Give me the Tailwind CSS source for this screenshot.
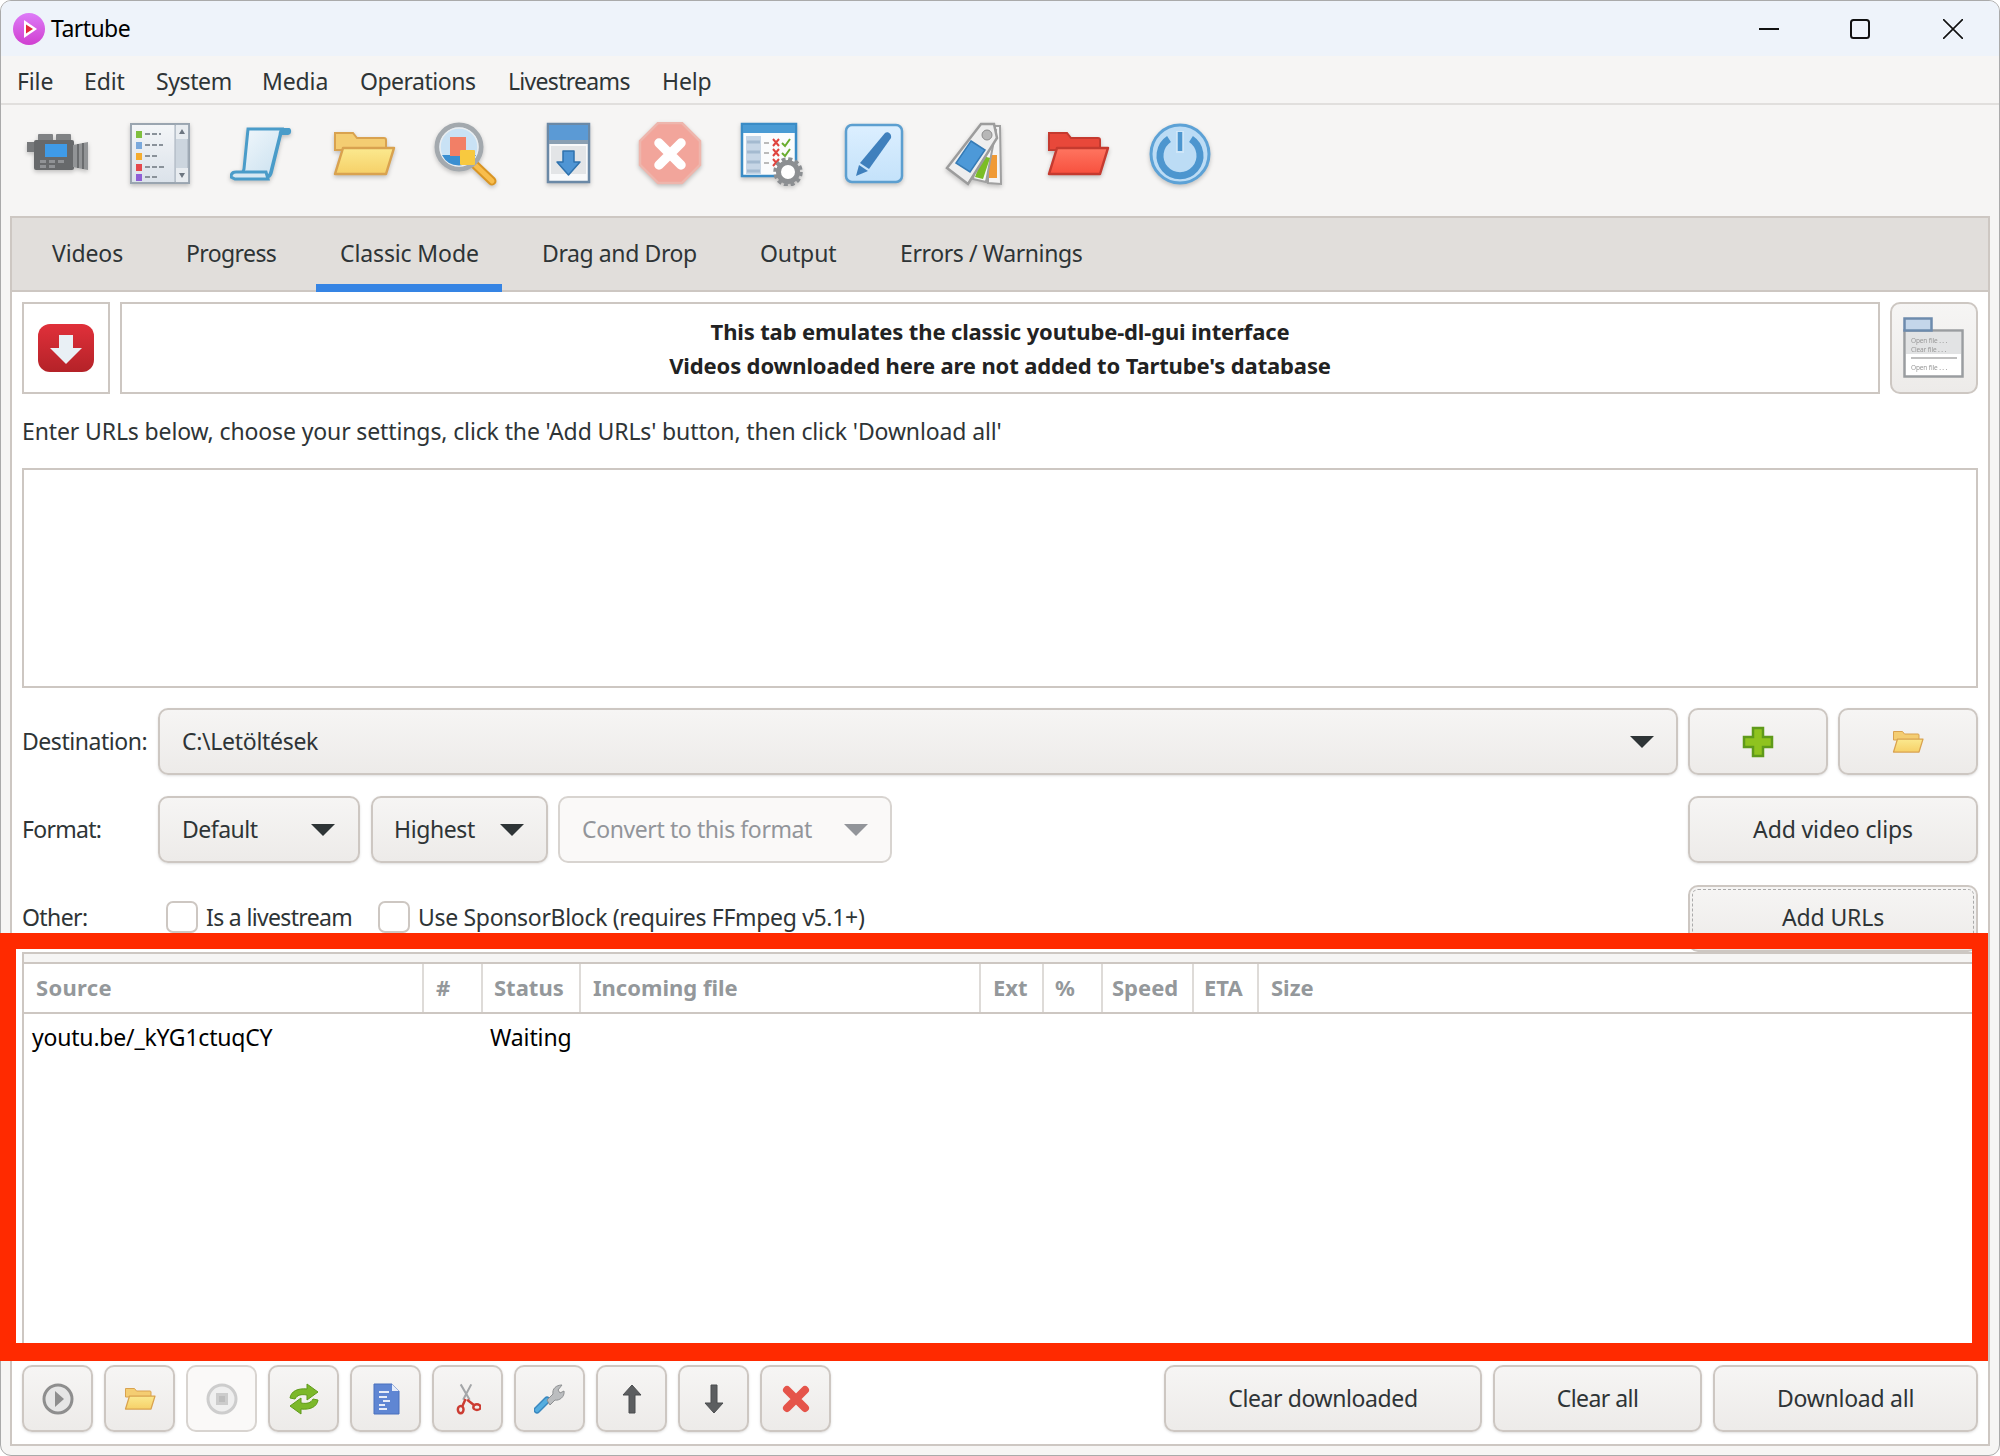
<!DOCTYPE html>
<html lang="en">
<head>
  <meta charset="UTF-8">
  <title>Tartube</title>
  <script src="https://cdn.jsdelivr.net/npm/@tailwindcss/browser@4"></script>
</head>
<body class="bg-white">
<!-- shared icons -->
<svg class="absolute w-0 h-0" aria-hidden="true">
  <defs>
    <linearGradient id="gBtn" x1="0" y1="0" x2="0" y2="1"><stop offset="0" stop-color="#fbe98f"/><stop offset="1" stop-color="#f6d068"/></linearGradient>
    <linearGradient id="gRed" x1="0" y1="0" x2="0" y2="1"><stop offset="0" stop-color="#ff7560"/><stop offset="1" stop-color="#f7503e"/></linearGradient>
    <linearGradient id="gPanel" x1="0" y1="0" x2="0" y2="1"><stop offset="0" stop-color="#f4f6f8"/><stop offset="1" stop-color="#dbe2ea"/></linearGradient>
    <linearGradient id="gScroll" x1="0" y1="0" x2="1" y2="1"><stop offset="0" stop-color="#f2f8fc"/><stop offset="1" stop-color="#c9e0ef"/></linearGradient>
    <linearGradient id="gYt" x1="0" y1="0" x2="0" y2="1"><stop offset="0" stop-color="#e0303a"/><stop offset="1" stop-color="#b42228"/></linearGradient>
    <linearGradient id="gPen" x1="0" y1="0" x2="0" y2="1"><stop offset="0" stop-color="#dcefff"/><stop offset="1" stop-color="#c4e2fa"/></linearGradient>
    <linearGradient id="gLogo" x1="0" y1="0" x2="0" y2="1"><stop offset="0" stop-color="#dd7cf8"/><stop offset="1" stop-color="#d03fd0"/></linearGradient>
    <symbol id="folder" viewBox="0 0 64 64">
      <path d="M3 11h18l4 5h27a2 2 0 0 1 2 2v10H3z" fill="#f4cd72" stroke="#d9a24f" stroke-width="2"/>
      <path d="M11 26h51l-8 26H3z" fill="url(#gBtn)" stroke="#d9a24f" stroke-width="2.5" stroke-linejoin="round"/>
    </symbol>
  </defs>
</svg>

<div class="relative w-[2000px] h-[1456px] overflow-hidden font-['Noto_Sans'] text-[23px] tracking-[-0.125px] text-[#2e3436]">
  <div class="flex flex-col h-full bg-[#f6f5f4] border border-[#aaaaaa] rounded-[11px] overflow-hidden">

    <!-- title bar -->
    <div class="flex items-center h-[55px] bg-[#eef3fa] text-black">
      <svg class="ml-[12px] w-[32px] h-[32px]" viewBox="0 0 32 32">
        <circle cx="16" cy="16" r="16" fill="url(#gLogo)"/>
        <path d="M11 7l13 9-13 9z" fill="#fff"/>
        <path d="M13 11.500l7 4.500-7 4.500z" fill="#e5283a"/>
      </svg>
      <span class="ml-[6px] tracking-[-0.55px]">Tartube</span>
      <div class="ml-auto flex items-center">
        <svg class="w-[20px] h-[20px] mr-[71px]" viewBox="0 0 20 20"><path d="M0 10h20" stroke="#111" stroke-width="2"/></svg>
        <svg class="w-[20px] h-[20px] mr-[73px]" viewBox="0 0 20 20"><rect x="1" y="1" width="18" height="18" rx="2.500" fill="none" stroke="#111" stroke-width="2"/></svg>
        <svg class="w-[20px] h-[20px] mr-[36px]" viewBox="0 0 20 20"><path d="M0 0l20 20M20 0L0 20" stroke="#111" stroke-width="1.600"/></svg>
      </div>
    </div>

    <!-- menu -->
    <div class="flex items-center h-[49px] pl-[16px] pt-[3px] border-b-2 border-[#e1dfdd]">
      <span class="w-[67px]">File</span>
      <span class="w-[72px]">Edit</span>
      <span class="w-[106px] tracking-[-0.4px]">System</span>
      <span class="w-[98px]">Media</span>
      <span class="w-[148px] tracking-[-0.5px]">Operations</span>
      <span class="w-[154px] tracking-[-0.7px]">Livestreams</span>
      <span>Help</span>
    </div>

    <!-- toolbar -->
    <div class="flex items-start h-[111px] pl-[6px] pt-[17px] blur-[0.5px] drop-shadow-[0_2px_2px_rgba(0,0,0,0.22)]">
      <div class="w-[102px] flex justify-center"><svg class="w-[64px] h-[64px]" viewBox="0 0 64 64">
        <path d="M1 20h9v10H1z" fill="#77797b"/>
        <rect x="12" y="12" width="15" height="7" rx="1" fill="#808284"/><rect x="30" y="12" width="15" height="7" rx="1" fill="#808284"/>
        <rect x="8" y="18" width="40" height="30" rx="2" fill="#67696b"/>
        <path d="M47 23l15-3v28l-15-3z" fill="#929496"/><path d="M52 22v24M57 21v26" stroke="#6a6c6e" stroke-width="2"/>
        <rect x="19" y="22" width="22" height="13" fill="#3f9be8"/>
        <path d="M14 38h6v3h-6zM23 38h6v3h-6zM32 38h6v3h-6zM14 43h6v3h-6zM23 43h6v3h-6z" fill="#909295"/>
      </svg></div>
      <div class="w-[102px] flex justify-center"><svg class="w-[64px] h-[64px]" viewBox="0 0 64 64">
        <rect x="3" y="2" width="58" height="59" fill="url(#gPanel)" stroke="#9aa5b0" stroke-width="2"/>
        <path d="M47 3h13v57H47z" fill="#ccd5de" stroke="#a5afba"/><path d="M48 3h12v14H48zM48 46h12v14H48z" fill="#e8ecf0"/>
        <path d="M51 12l3-5 3 5zM51 51l3 5 3-5z" fill="#6d7680"/>
        <path d="M8 9h6v7H8z" fill="#7fbf3f"/><path d="M8 20h6v7H8z" fill="#7aa9dc"/><path d="M8 31h6v7H8z" fill="#f5ac2f"/><path d="M8 42h6v7H8z" fill="#e5484d"/><path d="M8 52h6v7H8z" fill="#8f5fd6"/>
        <path d="M17 12h16M17 23h18M17 34h12M17 45h20M17 55h14" stroke="#8a929a" stroke-width="1.800" stroke-dasharray="5 2"/>
      </svg></div>
      <div class="w-[102px] flex justify-center"><svg class="w-[64px] h-[64px]" viewBox="0 0 64 64">
        <path d="M17 6h42c3 0 3 7-1 7h-6l-9 37c-1 5-4 7-8 7H5c-3 0-5-2-4-5h35c2 0 3-1 4-3l8-36c1-4 0-7-4-7z" fill="#4a9cc9"/>
        <path d="M18 7h36c-3 1-4 4-4 6l-9 36c-1 4-2 5-4 5H8c4 0 5-4 6-7z" fill="url(#gScroll)" stroke="#4a9cc9" stroke-width="3"/>
        <path d="M1 55c0-4 2-5 5-5h30l2 7H5z" fill="#d8e8f2" stroke="#4a9cc9" stroke-width="3"/>
      </svg></div>
      <div class="w-[102px] flex justify-center"><svg class="w-[64px] h-[64px]"><use href="#folder"/></svg></div>
      <div class="w-[102px] flex justify-center"><svg class="w-[64px] h-[64px]" viewBox="0 0 64 64">
        <path d="M38 40l20 19" stroke="#d99524" stroke-width="9" stroke-linecap="round"/><path d="M38 40l20 19" stroke="#f8bd4c" stroke-width="5" stroke-linecap="round"/>
        <circle cx="25" cy="25" r="22" fill="#c9e2f5" stroke="#a3a9ae" stroke-width="5"/>
        <circle cx="25" cy="25" r="19" fill="none" stroke="#e9edf0" stroke-width="1.500"/>
        <path d="M8 33h34a19 19 0 0 1-34 0z" fill="#3a8fd1"/>
        <rect x="16" y="15" width="16" height="19" fill="#f27f66"/><rect x="26" y="28" width="15" height="15" rx="1" fill="#f8c93f"/>
      </svg></div>
      <div class="w-[102px] flex justify-center"><svg class="w-[64px] h-[64px]" viewBox="0 0 64 64">
        <rect x="12" y="2" width="41" height="58" fill="#f8f9fa" stroke="#6b89a6" stroke-width="2.500"/>
        <rect x="13" y="3" width="39" height="19" fill="#5b9ad5"/><rect x="13" y="18" width="39" height="4" fill="#8a9fb2"/>
        <rect x="15" y="24" width="35" height="28" fill="#e3e5e7"/>
        <path d="M27 29h11v11h6L32.500 53 21 40h6z" fill="#4f95d4" stroke="#2f72ad" stroke-width="1.500" stroke-linejoin="round"/>
      </svg></div>
      <div class="w-[102px] flex justify-center"><svg class="w-[64px] h-[64px]" viewBox="0 0 64 64">
        <path d="M20 1h24l18 18v24L44 61H20L2 43V19z" fill="#f2a59b" stroke="#eeb6ad" stroke-width="2.500"/>
        <path d="M21 21l22 22M43 21L21 43" stroke="#fff" stroke-width="9.500" stroke-linecap="round"/>
      </svg></div>
      <div class="w-[102px] flex justify-center"><svg class="w-[64px] h-[64px]" viewBox="0 0 64 64">
        <rect x="2" y="2" width="54" height="52" fill="#fbfcfd" stroke="#3a8cc6" stroke-width="2.500"/>
        <rect x="3" y="3" width="52" height="8" fill="#4a9bd4"/><rect x="6" y="14" width="15" height="38" fill="#c7d6e6"/>
        <path d="M7 20h13M7 30h13M7 40h13M7 49h13" stroke="#a4bad0" stroke-width="3"/>
        <path d="M24 21h5M24 31h5M24 41h5" stroke="#bbb" stroke-width="2"/>
        <path d="M33 17l6 7M39 17l-6 7M33 27l6 7M39 27l-6 7M33 37l6 7M39 37l-6 7" stroke="#e0453f" stroke-width="2"/>
        <path d="M42 21l3 3 5-7M42 31l3 3 5-7M43 41l2 2 5-6" stroke="#69ad2f" stroke-width="2" fill="none"/>
        <circle cx="48" cy="50" r="9.500" fill="#fff" stroke="#8c8f92" stroke-width="5"/>
        <circle cx="48" cy="50" r="13" fill="none" stroke="#8c8f92" stroke-width="3.500" stroke-dasharray="4 2.800"/>
      </svg></div>
      <div class="w-[102px] flex justify-center"><svg class="w-[64px] h-[64px]" viewBox="0 0 64 64">
        <rect x="4" y="3" width="56" height="57" rx="6" fill="url(#gPen)" stroke="#5c9fd0" stroke-width="2.500"/>
        <path d="M43 11c3-2 7 1 6 5L27 47l-9-6z" fill="#3f80bd"/><path d="M17 43l9 6-12 5z" fill="#3f80bd"/>
      </svg></div>
      <div class="w-[102px] flex justify-center"><svg class="w-[64px] h-[64px]" viewBox="0 0 64 64">
        <path d="M44 4h12l1 58-13-1z" fill="#f4f4f4" stroke="#a0a0a0" stroke-width="2"/><rect x="45" y="33" width="8" height="23" fill="#f09a35"/>
        <path d="M40 6l12 2-10 52-13-3z" fill="#f7f7f7" stroke="#a0a0a0" stroke-width="2"/><path d="M39 34l7 2-7 21-8-2z" fill="#7bbd25"/>
        <path d="M37 2h13l3 14-29 46L3 46z" fill="#eeeeee" stroke="#9c9c9c" stroke-width="2.500"/>
        <path d="M27 19l14 9-15 22-14-9z" fill="#4d99d8" stroke="#357bb6" stroke-width="1.500"/>
        <circle cx="43" cy="13" r="5" fill="#b7b7b7" stroke="#8c8c8c"/>
      </svg></div>
      <div class="w-[102px] flex justify-center"><svg class="w-[64px] h-[64px]" viewBox="0 0 64 64">
        <path d="M3 11h18l4 5h27a2 2 0 0 1 2 2v10H3z" fill="#e8483a" stroke="#c53a2f" stroke-width="2"/>
        <path d="M11 26h51l-8 26H3z" fill="url(#gRed)" stroke="#c53a2f" stroke-width="2.500" stroke-linejoin="round"/>
      </svg></div>
      <div class="w-[102px] flex justify-center"><svg class="w-[64px] h-[64px]" viewBox="0 0 64 64">
        <circle cx="32" cy="32" r="29" fill="#bcdcf5" stroke="#5da2d6" stroke-width="3"/>
        <path d="M21 17a20 20 0 1 0 22 0" fill="none" stroke="#4d96cf" stroke-width="7"/>
        <path d="M32 9v22" stroke="#cfe6f8" stroke-width="8"/><path d="M32 10v19" stroke="#4d96cf" stroke-width="4.500"/>
      </svg></div>
    </div>

    <!-- notebook -->
    <div class="flex flex-col ml-[9px] mr-[9px] h-[1230px] border-2 border-[#cdc7c2] bg-white">
      <div class="flex h-[74px] bg-[#e1dedb] border-b-2 border-[#cdc7c2] pl-[30px] pb-[2px] items-center">
        <span class="w-[154px] pl-[10px]">Videos</span>
        <span class="w-[134px] -ml-[10px] tracking-[-0.6px]">Progress</span>
        <span class="w-[202px] ml-[20px] h-[74px] flex items-center relative">Classic Mode
          <span class="absolute -left-[24px] top-[68px] w-[186px] h-[8px] bg-[#3584e4]"></span>
        </span>
        <span class="w-[218px] tracking-[-0.4px]">Drag and Drop</span>
        <span class="w-[140px]">Output</span>
        <span class="tracking-[-0.4px]">Errors / Warnings</span>
      </div>

      <div class="flex-1 flex flex-col pl-[10px] pr-[10px] pt-[10px]">
        <!-- banner row -->
        <div class="flex h-[92px] gap-[10px]">
          <div class="w-[88px] border-2 border-[#cdc7c2] flex items-center justify-center">
            <svg class="w-[58px] h-[50px] blur-[0.6px]" viewBox="0 0 58 50">
              <rect x="1" y="1" width="56" height="48" rx="12" fill="url(#gYt)"/>
              <path d="M22 12h14v13h9L29 41 13 25h9z" fill="#e9f0f5"/>
            </svg>
          </div>
          <div class="flex-1 border-2 border-[#cdc7c2] pb-[1px] flex flex-col items-center justify-center font-bold text-[22px] tracking-[-0.14px] leading-[34px] text-[#222]">
            <span>This tab emulates the classic youtube-dl-gui interface</span>
            <span>Videos downloaded here are not added to Tartube's database</span>
          </div>
          <div class="w-[88px] border-2 border-[#cdc7c2] rounded-[10px] bg-gradient-to-b from-[#f6f5f4] to-[#edebe9] flex items-center justify-center">
            <svg class="w-[62px] h-[62px] blur-[0.5px]" viewBox="0 0 62 62">
              <rect x="1.500" y="13.500" width="58" height="46" fill="#fff" stroke="#9a9da0" stroke-width="2.500"/>
              <rect x="3" y="15" width="55" height="22" fill="#e2e3e4"/>
              <rect x="1.500" y="1.500" width="27" height="12" fill="#c4d6ea" stroke="#6d8bad" stroke-width="2.500"/>
              <text x="8" y="26" font-size="6.500" fill="#999">Open file . . .</text>
              <text x="8" y="35" font-size="6.500" fill="#999">Clear file . . .</text>
              <path d="M8 41h46" stroke="#aaa" stroke-width="1.500"/>
              <text x="8" y="53" font-size="6.500" fill="#999">Open file . . .</text>
            </svg>
          </div>
        </div>

        <div class="h-[74px] flex items-center">Enter URLs below, choose your settings, click the 'Add URLs' button, then click 'Download all'</div>
        <div class="h-[220px] border-2 border-[#cdc7c2]"></div>

        <!-- destination -->
        <div class="flex items-center h-[67px] mt-[20px]">
          <span class="w-[136px] tracking-[-0.45px]">Destination:</span>
          <div class="w-[1520px] h-full pl-[22px] pr-[22px] flex items-center justify-between border-2 border-[#cdc7c2] rounded-[10px] bg-gradient-to-b from-[#f6f5f4] to-[#edebe9] shadow-sm">
            <span class="tracking-[-0.3px]">C:\Letöltések</span>
            <span class="w-0 h-0 border-x-[12px] border-x-transparent border-t-[12px] border-t-[#2e3436]"></span>
          </div>
          <div class="ml-[10px] w-[140px] h-full flex items-center justify-center border-2 border-[#cdc7c2] rounded-[10px] bg-gradient-to-b from-[#f6f5f4] to-[#edebe9] shadow-sm">
            <svg class="w-[32px] h-[32px] blur-[0.4px]" viewBox="0 0 32 32"><path d="M11 2h10v9h9v10h-9v9H11v-9H2V11h9z" fill="#8fc31f" stroke="#5f9a1a" stroke-width="2.500"/></svg>
          </div>
          <div class="ml-[10px] w-[140px] h-full flex items-center justify-center border-2 border-[#cdc7c2] rounded-[10px] bg-gradient-to-b from-[#f6f5f4] to-[#edebe9] shadow-sm">
            <svg class="w-[32px] h-[32px] blur-[0.4px]"><use href="#folder"/></svg>
          </div>
        </div>

        <!-- format -->
        <div class="flex items-center h-[67px] mt-[21px]">
          <span class="w-[136px] tracking-[-0.7px]">Format:</span>
          <div class="w-[202px] h-full pl-[22px] pr-[23px] flex items-center justify-between border-2 border-[#cdc7c2] rounded-[10px] bg-gradient-to-b from-[#f6f5f4] to-[#edebe9] shadow-sm">
            <span class="tracking-[-0.5px]">Default</span>
            <span class="w-0 h-0 border-x-[12px] border-x-transparent border-t-[12px] border-t-[#2e3436]"></span>
          </div>
          <div class="ml-[11px] w-[177px] h-full pl-[21px] pr-[22px] flex items-center justify-between border-2 border-[#cdc7c2] rounded-[10px] bg-gradient-to-b from-[#f6f5f4] to-[#edebe9] shadow-sm">
            <span class="tracking-[-0.4px]">Highest</span>
            <span class="w-0 h-0 border-x-[12px] border-x-transparent border-t-[12px] border-t-[#2e3436]"></span>
          </div>
          <div class="ml-[10px] w-[334px] h-full pl-[22px] pr-[22px] flex items-center justify-between border-2 border-[#d8d4d0] rounded-[10px] bg-[#faf9f8] text-[#92959a]">
            <span class="tracking-[-0.4px]">Convert to this format</span>
            <span class="w-0 h-0 border-x-[12px] border-x-transparent border-t-[12px] border-t-[#92959a]"></span>
          </div>
          <div class="ml-auto w-[290px] h-full flex items-center justify-center border-2 border-[#cdc7c2] rounded-[10px] bg-gradient-to-b from-[#f6f5f4] to-[#edebe9] shadow-sm">Add video clips</div>
        </div>

        <!-- other -->
        <div class="flex items-start h-[67px] mt-[22px]">
          <span class="w-[144px] mt-[15px] tracking-[-0.6px]">Other:</span>
          <span class="w-[32px] h-[32px] mt-[16px] border-2 border-[#cdc7c2] rounded-[7px] bg-white"></span>
          <span class="w-[172px] ml-[8px] mt-[15px] tracking-[-0.65px]">Is a livestream</span>
          <span class="w-[32px] h-[32px] mt-[16px] border-2 border-[#cdc7c2] rounded-[7px] bg-white"></span>
          <span class="ml-[8px] mt-[15px] tracking-[-0.32px]">Use SponsorBlock (requires FFmpeg v5.1+)</span>
          <div class="ml-auto w-[290px] h-full p-[2px] border-2 border-[#cdc7c2] rounded-[10px] bg-gradient-to-b from-[#f6f5f4] to-[#edebe9]">
            <div class="h-full flex items-center justify-center border border-dashed border-[#aaaaaa] rounded-[6px] pb-[2px]">Add URLs</div>
          </div>
        </div>

        <!-- download list -->
        <div class="h-[399px] border-t-2 border-x-2 border-b-2 border-[#cdc7c2]">
          <div class="h-[8px] bg-[#f6f5f4] border-b-2 border-[#cdc7c2] box-content"></div>
          <div class="flex h-[50px] border-b-2 border-[#cdc7c2] font-bold text-[22px] tracking-normal text-[#94989b]">
            <span class="w-[400px] pl-[12px] pb-[2px] flex items-center border-r-2 border-[#dedbd8] tracking-[0.3px]">Source</span>
            <span class="w-[59px] pl-[12px] pb-[2px] flex items-center border-r-2 border-[#dedbd8]">#</span>
            <span class="w-[98px] pl-[11px] pb-[2px] flex items-center border-r-2 border-[#dedbd8]">Status</span>
            <span class="w-[400px] pl-[12px] pb-[2px] flex items-center border-r-2 border-[#dedbd8]">Incoming file</span>
            <span class="w-[63px] pl-[12px] pb-[2px] flex items-center border-r-2 border-[#dedbd8]">Ext</span>
            <span class="w-[59px] pl-[11px] pb-[2px] flex items-center border-r-2 border-[#dedbd8]">%</span>
            <span class="w-[91px] pl-[9px] pb-[2px] flex items-center border-r-2 border-[#dedbd8]">Speed</span>
            <span class="w-[65px] pl-[10px] pb-[2px] flex items-center border-r-2 border-[#dedbd8]">ETA</span>
            <span class="pl-[12px] pb-[2px] flex items-center">Size</span>
          </div>
          <div class="flex h-[47px] items-center text-black">
            <span class="w-[466px] pl-[8px] tracking-[-0.2px]">youtu.be/_kYG1ctuqCY</span>
            <span>Waiting</span>
          </div>
        </div>

        <!-- bottom buttons -->
        <div class="flex h-[67px] mt-[14px] gap-[11px]">
          <div class="w-[71px] flex items-center justify-center border-2 border-[#cdc7c2] rounded-[10px] bg-gradient-to-b from-[#f6f5f4] to-[#edebe9] shadow-sm">
            <svg class="w-[32px] h-[32px] blur-[0.4px]" viewBox="0 0 32 32"><circle cx="16" cy="16" r="14" fill="#e6e6e6" stroke="#8e8e8e" stroke-width="3"/><path d="M13 8l9 8-9 8z" fill="#8e8e8e"/></svg>
          </div>
          <div class="w-[71px] flex items-center justify-center border-2 border-[#cdc7c2] rounded-[10px] bg-gradient-to-b from-[#f6f5f4] to-[#edebe9] shadow-sm">
            <svg class="w-[32px] h-[32px] blur-[0.4px]"><use href="#folder"/></svg>
          </div>
          <div class="w-[71px] flex items-center justify-center border-2 border-[#d8d4d0] rounded-[10px] bg-[#faf9f8]">
            <svg class="w-[32px] h-[32px] blur-[0.4px]" viewBox="0 0 32 32"><circle cx="16" cy="16" r="14" fill="#efefef" stroke="#cdcdcd" stroke-width="3"/><rect x="10" y="10" width="12" height="12" fill="#cccccc"/><rect x="13" y="13" width="6" height="6" fill="#bdbdbd"/></svg>
          </div>
          <div class="w-[71px] flex items-center justify-center border-2 border-[#cdc7c2] rounded-[10px] bg-gradient-to-b from-[#f6f5f4] to-[#edebe9] shadow-sm">
            <svg class="w-[32px] h-[32px] blur-[0.4px]" viewBox="0 0 32 32">
              <path d="M2 15c1-7 8-10 17-9V1l11 8-11 8v-5c-6-1-10 0-12 4z" fill="#7cb82a" stroke="#5f9a1a"/>
              <path d="M30 17c-1 7-8 10-17 9v5L2 23l11-8v5c6 1 10 0 12-4z" fill="#7cb82a" stroke="#5f9a1a"/>
            </svg>
          </div>
          <div class="w-[71px] flex items-center justify-center border-2 border-[#cdc7c2] rounded-[10px] bg-gradient-to-b from-[#f6f5f4] to-[#edebe9] shadow-sm">
            <svg class="w-[32px] h-[32px] blur-[0.4px]" viewBox="0 0 32 32">
              <path d="M4 1h18l7 7v23H4z" fill="#5f86d3" stroke="#4a70bd"/><path d="M22 1l7 7h-7z" fill="#e6ecf8"/>
              <path d="M9 9h10M9 14h8M13 18h7M9 22h6M9 26h8" stroke="#e6ecf8" stroke-width="2"/>
            </svg>
          </div>
          <div class="w-[71px] flex items-center justify-center border-2 border-[#cdc7c2] rounded-[10px] bg-gradient-to-b from-[#f6f5f4] to-[#edebe9] shadow-sm">
            <svg class="w-[26px] h-[32px] blur-[0.4px]" viewBox="0 0 32 38">
              <path d="M7 1l11 19M20 1L10 20" stroke="#a4a6a8" stroke-width="2.500"/>
              <path d="M13 19l-4 9M15 20l9 7" stroke="#cc3c32" stroke-width="3"/>
              <ellipse cx="7" cy="32" rx="3.500" ry="4.500" fill="none" stroke="#cc3c32" stroke-width="3"/>
              <ellipse cx="27" cy="29" rx="4.500" ry="3.500" fill="none" stroke="#cc3c32" stroke-width="3"/>
            </svg>
          </div>
          <div class="w-[71px] flex items-center justify-center border-2 border-[#cdc7c2] rounded-[10px] bg-gradient-to-b from-[#f6f5f4] to-[#edebe9] shadow-sm">
            <svg class="w-[32px] h-[32px] blur-[0.4px]" viewBox="0 0 32 32">
              <path d="M3 27l10-10" stroke="#3a88bf" stroke-width="7" stroke-linecap="round"/><path d="M3 27l10-10" stroke="#55aee0" stroke-width="4" stroke-linecap="round"/>
              <path d="M13 17l6-6c-1-5 3-9 9-9l-4 5 2 3 4-2c1 6-5 10-9 9l-5 5z" fill="#bbbdbf" stroke="#8d8f91"/>
            </svg>
          </div>
          <div class="w-[71px] flex items-center justify-center border-2 border-[#cdc7c2] rounded-[10px] bg-gradient-to-b from-[#f6f5f4] to-[#edebe9] shadow-sm">
            <svg class="w-[32px] h-[32px] blur-[0.4px]" viewBox="0 0 32 32"><path d="M16 2l9 10h-6v18h-6V12H7z" fill="#5c5e60" stroke="#4a4c4e" stroke-linejoin="round"/></svg>
          </div>
          <div class="w-[71px] flex items-center justify-center border-2 border-[#cdc7c2] rounded-[10px] bg-gradient-to-b from-[#f6f5f4] to-[#edebe9] shadow-sm">
            <svg class="w-[32px] h-[32px] blur-[0.4px]" viewBox="0 0 32 32"><path d="M16 30l9-10h-6V2h-6v18H7z" fill="#5c5e60" stroke="#4a4c4e" stroke-linejoin="round"/></svg>
          </div>
          <div class="w-[71px] flex items-center justify-center border-2 border-[#cdc7c2] rounded-[10px] bg-gradient-to-b from-[#f6f5f4] to-[#edebe9] shadow-sm">
            <svg class="w-[32px] h-[32px] blur-[0.4px]" viewBox="0 0 32 32"><path d="M7 7l18 18M25 7L7 25" stroke="#e5544a" stroke-width="8" stroke-linecap="round"/></svg>
          </div>
          <div class="ml-auto w-[318px] flex items-center justify-center border-2 border-[#cdc7c2] rounded-[10px] bg-gradient-to-b from-[#f6f5f4] to-[#edebe9] shadow-sm tracking-[-0.4px]">Clear downloaded</div>
          <div class="w-[209px] flex items-center justify-center border-2 border-[#cdc7c2] rounded-[10px] bg-gradient-to-b from-[#f6f5f4] to-[#edebe9] shadow-sm tracking-[-0.55px]">Clear all</div>
          <div class="w-[265px] flex items-center justify-center border-2 border-[#cdc7c2] rounded-[10px] bg-gradient-to-b from-[#f6f5f4] to-[#edebe9] shadow-sm tracking-[-0.25px]">Download all</div>
        </div>
      </div>
    </div>
  </div>

  <!-- red annotation frame drawn over the screenshot -->
  <div class="absolute left-0 top-[933px] w-[1988px] h-[428px] border-x-[16px] border-t-[16px] border-b-[18px] border-[#ff2a00]"></div>
</div>
</body>
</html>
